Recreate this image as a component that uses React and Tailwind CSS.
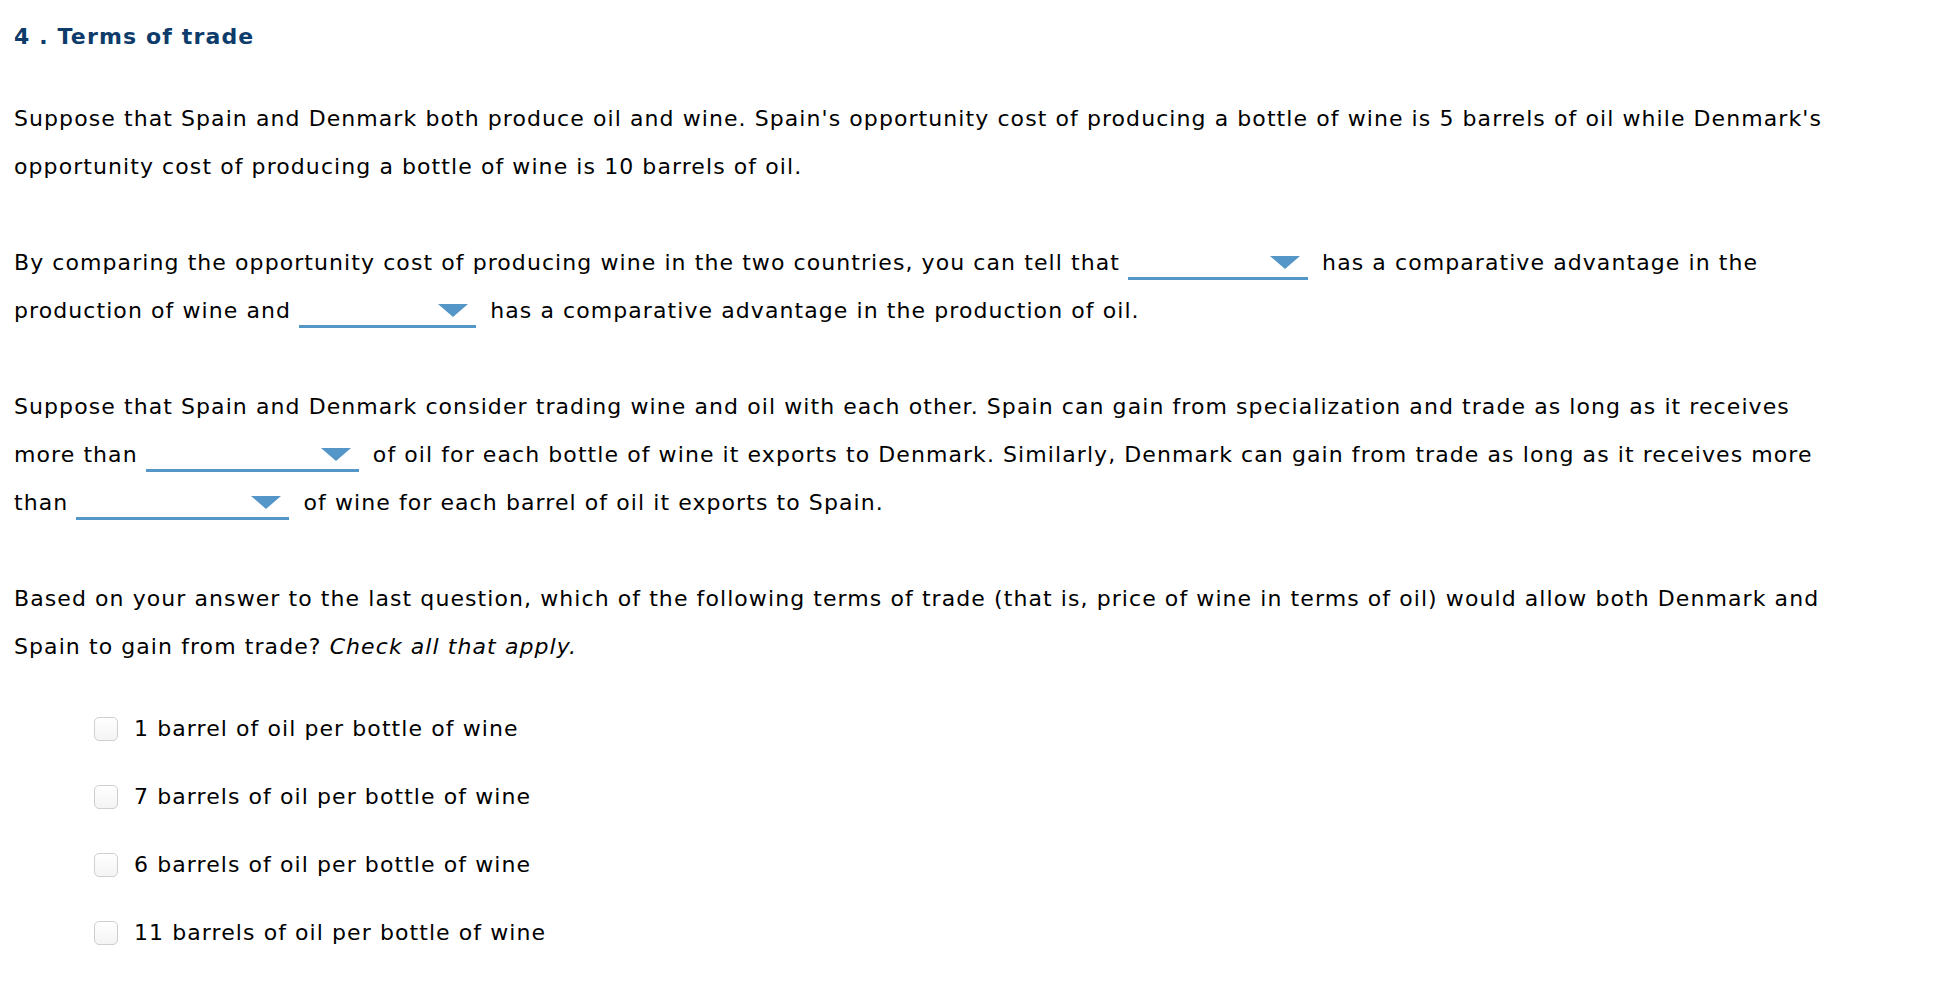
function Drop({ w }) {
  return (
    <span className={`inline-block ${w} h-[30px] border-b-[3px] border-[#5596c8] mr-[6px] align-[-10px]`}>
      <div className="ml-auto mr-[8px] mt-[6px] w-0 h-0 border-l-[15px] border-r-[15px] border-t-[13px] border-l-transparent border-r-transparent border-t-[#5596c8]" />
    </span>
  );
}

function Check({ children }) {
  return (
    <div className="flex items-center h-[68px]">
      <span className="w-[24px] h-[24px] rounded-[5px] border border-[#cfcfcf] bg-gradient-to-b from-white to-[#f4f4f4] shrink-0" />
      <span className="ml-[16px]">{children}</span>
    </div>
  );
}

export default function App() {
  return (
    <div className="min-h-screen bg-white pl-[14px] pt-[13px] text-[22px] leading-[48px] tracking-[1.08px] text-black whitespace-nowrap font-['DejaVu_Sans',Verdana,sans-serif]">
      <h1 className="font-bold tracking-[1.15px] text-[#0d3b6a]">4 . Terms of trade</h1>

      <p className="mt-[34px]">
        Suppose that Spain and Denmark both produce oil and wine. Spain's opportunity cost of producing a bottle of wine is 5 barrels of oil while Denmark's
        <br />
        opportunity cost of producing a bottle of wine is 10 barrels of oil.
      </p>

      <p className="mt-[48px]">
        By comparing the opportunity cost of producing wine in the two countries, you can tell that <Drop w="w-[180px]" /> has a comparative advantage in the
        <br />
        production of wine and <Drop w="w-[177px]" /> has a comparative advantage in the production of oil.
      </p>

      <p className="mt-[48px]">
        Suppose that Spain and Denmark consider trading wine and oil with each other. Spain can gain from specialization and trade as long as it receives
        <br />
        more than <Drop w="w-[213px]" /> of oil for each bottle of wine it exports to Denmark. Similarly, Denmark can gain from trade as long as it receives more
        <br />
        than <Drop w="w-[213px]" /> of wine for each barrel of oil it exports to Spain.
      </p>

      <p className="mt-[48px]">
        Based on your answer to the last question, which of the following terms of trade (that is, price of wine in terms of oil) would allow both Denmark and
        <br />
        Spain to gain from trade? <em>Check all that apply.</em>
      </p>

      <div className="mt-[24px] pl-[80px]">
        <Check>1 barrel of oil per bottle of wine</Check>
        <Check>7 barrels of oil per bottle of wine</Check>
        <Check>6 barrels of oil per bottle of wine</Check>
        <Check>11 barrels of oil per bottle of wine</Check>
      </div>
    </div>
  );
}
